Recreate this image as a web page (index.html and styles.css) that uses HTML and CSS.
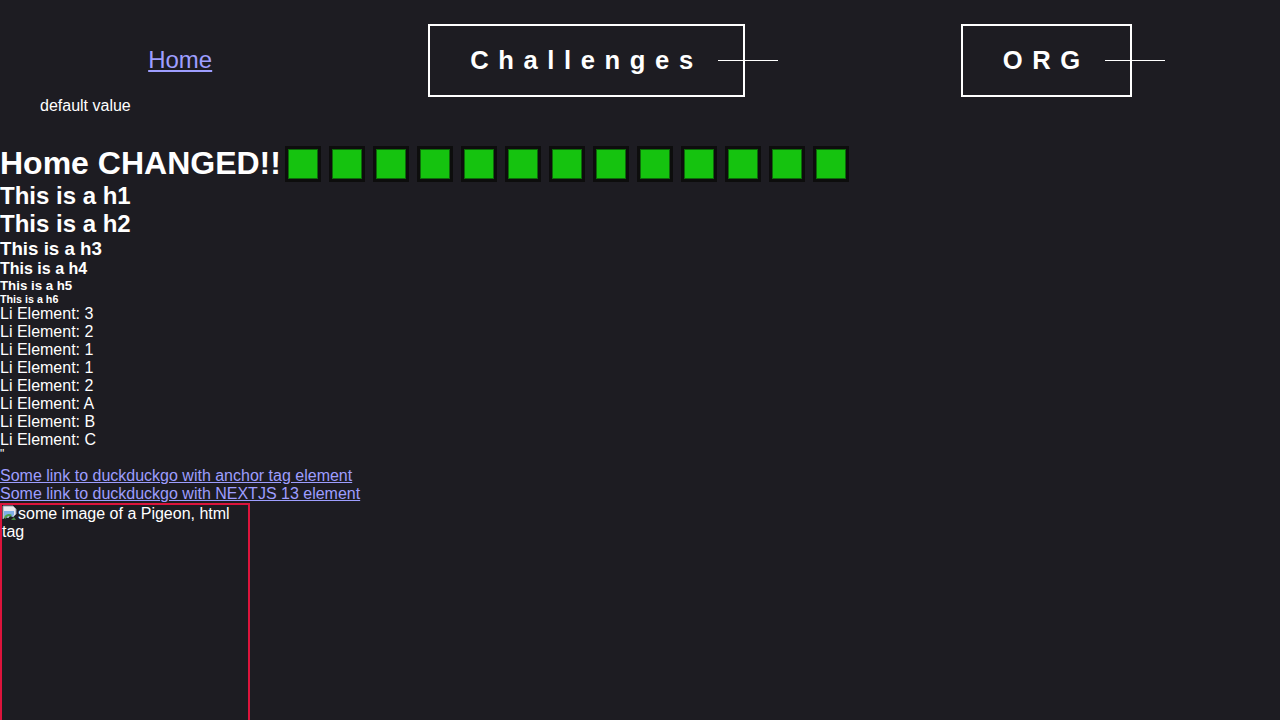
FILE: index.html
```html
<!DOCTYPE html>
<html lang="en">
<head>
<meta charset="utf-8">
<title>Home</title>
<link rel="stylesheet" href="styles.css">
</head>
<body>
<header class="site-header">
  <nav class="nav">
    <a class="nav-home" href="#">Home</a>
    <div class="nav-box">Challenges</div>
    <div class="nav-box">ORG</div>
  </nav>
  <div class="default-value">default value</div>
</header>
<main class="content">
  <div class="title-row">
    <h1 class="title">Home CHANGED!!</h1>
    <span class="sq"></span><span class="sq"></span><span class="sq"></span><span class="sq"></span><span class="sq"></span><span class="sq"></span><span class="sq"></span><span class="sq"></span><span class="sq"></span><span class="sq"></span><span class="sq"></span><span class="sq"></span><span class="sq"></span>
  </div>
  <section class="headings">
    <h1 class="h h1">This is a h1</h1>
    <h2 class="h h2">This is a h2</h2>
    <h3 class="h h3">This is a h3</h3>
    <h4 class="h h4">This is a h4</h4>
    <h5 class="h h5">This is a h5</h5>
    <h6 class="h h6">This is a h6</h6>
  </section>
  <ul class="list">
    <li>Li Element: 3</li>
    <li>Li Element: 2</li>
    <li>Li Element: 1</li>
  </ul>
  <ol class="list">
    <li>Li Element: 1</li>
    <li>Li Element: 2</li>
  </ol>
  <ul class="list">
    <li>Li Element: A</li>
    <li>Li Element: B</li>
    <li>Li Element: C</li>
  </ul>
  <div class="quote">"</div>
  <div class="links">
    <a class="link" href="#">Some link to duckduckgo with anchor tag element</a>
    <a class="link" href="#">Some link to duckduckgo with NEXTJS 13 element</a>
  </div>
  <div class="pic-frame">
    <span class="broken-icon"><svg width="16" height="16" viewBox="0 0 16 16"><path d="M1 1h10l3 3v5l-3 3-2-2-3 3-2-2-3 3z" fill="#e9e9ee" stroke="#9a9aa8" stroke-width="1"/><path d="M2 6h10v4l-2 2-2-2-3 3-2-2-1 1z" fill="#7fb0e8"/><path d="M2 12c2-3 5-4 8-2l-2 2-2-1-3 3z" fill="#4fa14a"/><path d="M14 10l-2 2 2 3h-5z" fill="#4fa14a" opacity="0.8"/></svg></span>some image of a Pigeon, html tag
  </div>
</main>
</body>
</html>
```
FILE: styles.css
```css
html, body {
  margin: 0;
  padding: 0;
}
body {
  background: #1d1c22;
  color: #ffffff;
  font-family: "Liberation Sans", Arial, sans-serif;
  font-size: 16px;
}
a {
  color: #9e9eff;
}
.site-header {
  padding-top: 24px;
}
.nav {
  display: flex;
  justify-content: center;
  align-items: center;
  gap: 216px;
}
.nav-home {
  font-size: 24px;
  margin-top: -1px;
}
.nav-box {
  position: relative;
  border: 2px solid #ffffff;
  padding: 20px 40px;
  font-size: 25.6px;
  font-weight: bold;
  letter-spacing: 9.6px;
  line-height: 29px;
}
.nav-box::after {
  content: "";
  position: absolute;
  top: calc(50% - 1px);
  right: -35px;
  width: 60px;
  height: 1px;
  background: #ffffff;
}
.default-value {
  padding-left: 40px;
}
.content {
  margin-top: 30px;
}
.title-row {
  display: flex;
  align-items: center;
}
.title {
  margin: 0;
  font-size: 32px;
}
.sq {
  width: 30px;
  height: 30px;
  margin: 0 4px;
  background: #15c30f;
  border: 3px solid #0d0d0d;
  box-shadow: inset 0 0 0 1px #0d6a0a;
  flex: none;
}
.h {
  margin: 0;
}
.h1 { font-size: 24px; }
.h2 { font-size: 24px; }
.h3 { font-size: 18.72px; }
.h4 { font-size: 16px; }
.h5 { font-size: 13.28px; }
.h6 { font-size: 10.72px; }
.list {
  list-style: none;
  margin: 0;
  padding: 0;
}
.quote {
  font-size: 12px;
  line-height: 10px;
  padding-bottom: 8px;
}
.links {
  display: flex;
  flex-direction: column;
  align-items: flex-start;
}
.pic-frame {
  width: 246px;
  height: 300px;
  border: 2px solid #dc143c;
  line-height: 18px;
}
.broken-icon {
  display: inline-block;
  width: 16px;
  height: 16px;
  vertical-align: -2px;
}
.broken-icon svg {
  display: block;
}
```
